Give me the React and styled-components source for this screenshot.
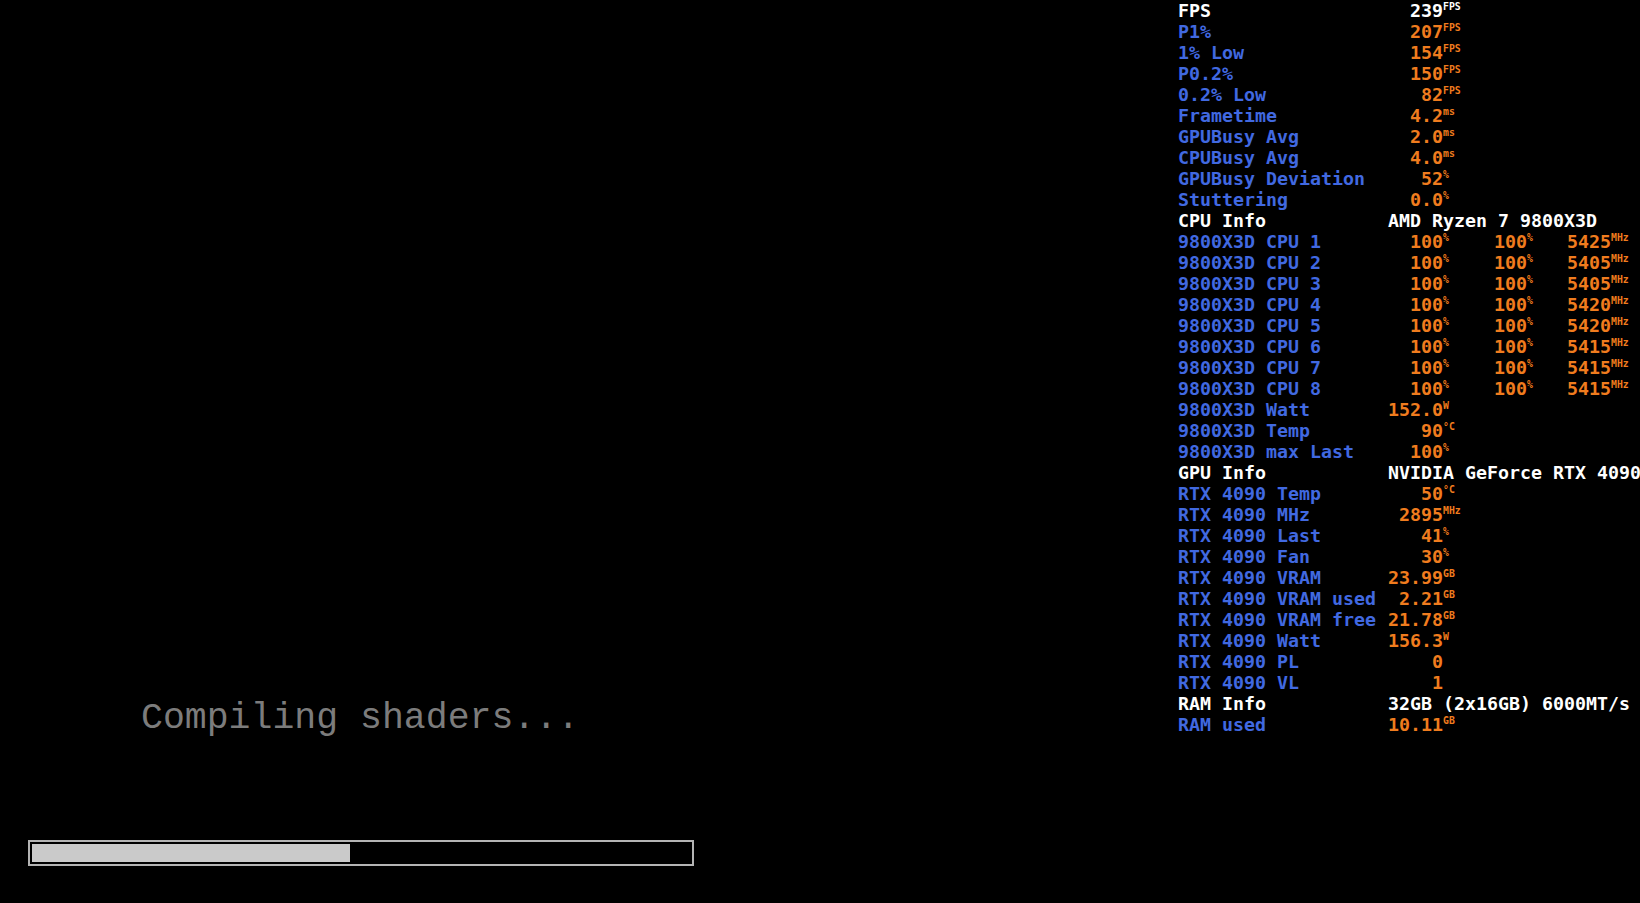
import React from 'react';
import styled, { createGlobalStyle } from 'styled-components';

const GlobalStyle = createGlobalStyle`
  html, body {
    margin: 0;
    padding: 0;
    background: #000;
  }
`

const Screen = styled.div`
  position: relative;
  width: 1640px;
  height: 903px;
  background: #000;
  overflow: hidden;
  display: flex;
  flex-direction: column;
  justify-content: flex-end;
  padding: 0 0 37px 28px;
  box-sizing: border-box;
`

const Status = styled.div`
  font-family: "Liberation Mono", monospace;
  font-size: 36.5px;
  color: #7c7c7c;
  padding-left: 113px;
  margin-bottom: 101px;
`

const Bar = styled.div`
  width: 666px;
  height: 26px;
  box-sizing: border-box;
  border: 2px solid #b4b4b4;
  padding: 2px;
  background: #000;
`

const Fill = styled.div`
  height: 100%;
  background: #cacaca;
`

const Overlay = styled.div`
  position: absolute;
  top: 0;
  left: 1178px;
  width: 462px;
  font-family: "DejaVu Sans Mono", monospace;
  font-weight: bold;
  font-size: 18.27px;
  line-height: 21px;
  white-space: nowrap;
`

const Row = styled.div`
  display: grid;
  grid-template-columns: 210px 84px 84px 84px;
  height: 21px;
`

const Label = styled.div`
  color: ${p => (p.$head ? '#ffffff' : '#4169e1')};
`

const Info = styled.div`
  grid-column: 2 / -1;
  color: #ffffff;
`

const Cell = styled.div`
  display: flex;
  align-items: flex-start;
  color: ${p => (p.$white ? '#ffffff' : '#f07c1e')};
`

const Num = styled.span`
  width: 55px;
  flex: none;
  text-align: right;
`

const Unit = styled.span`
  font-size: 9.8px;
  line-height: 1;
  margin-top: 2px;
`

const cpu = [5425, 5405, 5405, 5420, 5420, 5415, 5415, 5415]

const rows = [
  { label: 'FPS', head: true, white: true, cells: [['239', 'FPS']] },
  { label: 'P1%', cells: [['207', 'FPS']] },
  { label: '1% Low', cells: [['154', 'FPS']] },
  { label: 'P0.2%', cells: [['150', 'FPS']] },
  { label: '0.2% Low', cells: [['82', 'FPS']] },
  { label: 'Frametime', cells: [['4.2', 'ms']] },
  { label: 'GPUBusy Avg', cells: [['2.0', 'ms']] },
  { label: 'CPUBusy Avg', cells: [['4.0', 'ms']] },
  { label: 'GPUBusy Deviation', cells: [['52', '%']] },
  { label: 'Stuttering', cells: [['0.0', '%']] },
  { label: 'CPU Info', head: true, info: 'AMD Ryzen 7 9800X3D' },
  ...cpu.map((mhz, i) => ({
    label: `9800X3D CPU ${i + 1}`,
    cells: [['100', '%'], ['100', '%'], [String(mhz), 'MHz']],
  })),
  { label: '9800X3D Watt', cells: [['152.0', 'W']] },
  { label: '9800X3D Temp', cells: [['90', '°C']] },
  { label: '9800X3D max Last', cells: [['100', '%']] },
  { label: 'GPU Info', head: true, info: 'NVIDIA GeForce RTX 4090' },
  { label: 'RTX 4090 Temp', cells: [['50', '°C']] },
  { label: 'RTX 4090 MHz', cells: [['2895', 'MHz']] },
  { label: 'RTX 4090 Last', cells: [['41', '%']] },
  { label: 'RTX 4090 Fan', cells: [['30', '%']] },
  { label: 'RTX 4090 VRAM', cells: [['23.99', 'GB']] },
  { label: 'RTX 4090 VRAM used', cells: [['2.21', 'GB']] },
  { label: 'RTX 4090 VRAM free', cells: [['21.78', 'GB']] },
  { label: 'RTX 4090 Watt', cells: [['156.3', 'W']] },
  { label: 'RTX 4090 PL', cells: [['0', '']] },
  { label: 'RTX 4090 VL', cells: [['1', '']] },
  { label: 'RAM Info', head: true, info: '32GB (2x16GB) 6000MT/s' },
  { label: 'RAM used', cells: [['10.11', 'GB']] },
]

const App = () => {
  const progress = 48.3

  return (
    <>
      <GlobalStyle />
      <Screen>
        <Status>Compiling shaders...</Status>
        <Bar>
          <Fill style={{ width: `${progress}%` }} />
        </Bar>

        <Overlay>
          {rows.map((row, index) => (
            <Row key={index}>
              <Label $head={row.head}>{row.label}</Label>
              {row.info ? (
                <Info>{row.info}</Info>
              ) : (
                row.cells.map(([v, u], i) => (
                  <Cell key={i} $white={row.white}>
                    <Num>{v}</Num>
                    {u && <Unit>{u}</Unit>}
                  </Cell>
                ))
              )}
            </Row>
          ))}
        </Overlay>
      </Screen>
    </>
  )
}

export default App
